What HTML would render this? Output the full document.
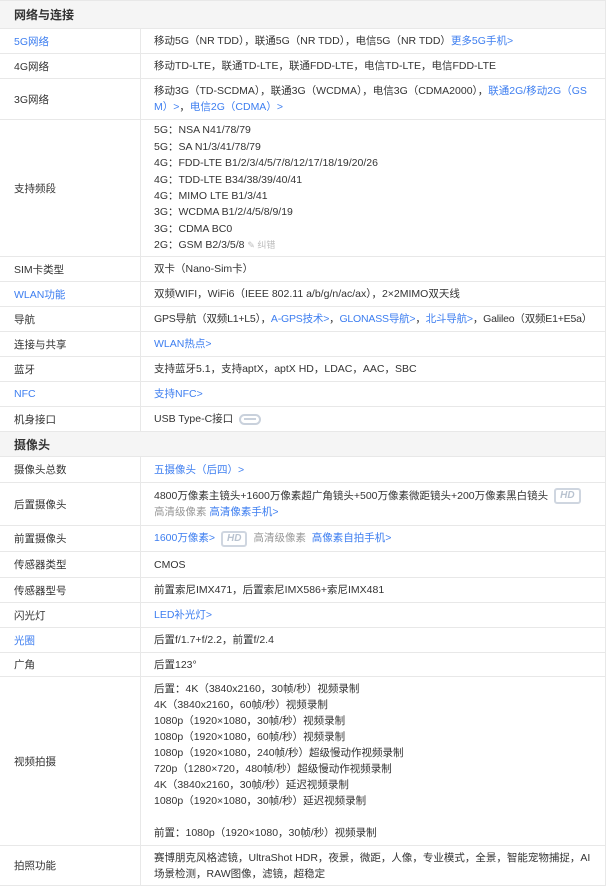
<!DOCTYPE html>
<html><head><meta charset="utf-8"><style>
*{margin:0;padding:0;box-sizing:border-box}
body{width:612px;height:881px;overflow:hidden;background:#fff;font-family:"Liberation Sans","Noto Sans CJK SC",sans-serif;font-size:10.5px;color:#333}
.t{position:absolute;left:0;top:0;width:606px;border-right:1px solid #e8e8e8;border-top:1px solid #e8e8e8}
.r{display:flex;border-bottom:1px solid #e8e8e8}
.l{width:141px;flex:none;border-right:1px solid #e8e8e8;padding-left:14px;display:flex;align-items:center}
.v{flex:1;padding:0 12px 0 13px;display:flex;align-items:center;line-height:16px}
.h{background:#f5f5f5;padding-left:14px;display:flex;align-items:center;font-weight:bold;font-size:12px;border-bottom:1px solid #e8e8e8}
a,.a{color:#3d7ef0;text-decoration:none}
.g{color:#999}
.hd{display:inline-block;border:2px solid #cfd6e0;border-radius:3px;color:#b9c3d0;font-style:italic;font-weight:bold;font-size:10px;line-height:12px;padding:0 4px;margin:0 6px;vertical-align:middle}
.usb{display:inline-block;width:22px;height:11px;border:2px solid #c9d1dc;border-radius:6px;margin-left:6px;vertical-align:middle;position:relative}
.usb:after{content:"";position:absolute;left:3px;right:3px;top:2.5px;height:2px;background:#c9d1dc}
</style></head><body>
<div class="t">
<div class="h" style="height:28px">网络与连接</div>
<div class="r" style="height:25px"><div class="l a">5G网络</div><div class="v"><div>移动5G（NR TDD），联通5G（NR TDD），电信5G（NR TDD）<a>更多5G手机&gt;</a></div></div></div>
<div class="r" style="height:25px"><div class="l">4G网络</div><div class="v"><div>移动TD-LTE，联通TD-LTE，联通FDD-LTE，电信TD-LTE，电信FDD-LTE</div></div></div>
<div class="r" style="height:41px"><div class="l">3G网络</div><div class="v"><div style="word-break:break-all">移动3G（TD-SCDMA），联通3G（WCDMA），电信3G（CDMA2000），<a>联通2G/移动2G（GSM）&gt;</a>，<a>电信2G（CDMA）&gt;</a></div></div></div>
<div class="r" style="height:137px"><div class="l">支持频段</div><div class="v" style="line-height:16.4px"><div>5G：NSA N41/78/79<br>5G：SA N1/3/41/78/79<br>4G：FDD-LTE B1/2/3/4/5/7/8/12/17/18/19/20/26<br>4G：TDD-LTE B34/38/39/40/41<br>4G：MIMO LTE B1/3/41<br>3G：WCDMA B1/2/4/5/8/9/19<br>3G：CDMA BC0<br>2G：GSM B2/3/5/8 <span class="g" style="font-size:9px;color:#bbb">✎ 纠错</span></div></div></div>
<div class="r" style="height:25px"><div class="l">SIM卡类型</div><div class="v"><div>双卡（Nano-Sim卡）</div></div></div>
<div class="r" style="height:25px"><div class="l a">WLAN功能</div><div class="v"><div>双频WIFI，WiFi6（IEEE 802.11 a/b/g/n/ac/ax），2×2MIMO双天线</div></div></div>
<div class="r" style="height:25px"><div class="l">导航</div><div class="v"><div style="white-space:nowrap;letter-spacing:-0.2px">GPS导航（双频L1+L5），<a>A-GPS技术&gt;</a>，<a>GLONASS导航&gt;</a>，<a>北斗导航&gt;</a>，Galileo（双频E1+E5a）</div></div></div>
<div class="r" style="height:25px"><div class="l">连接与共享</div><div class="v"><div><a>WLAN热点&gt;</a></div></div></div>
<div class="r" style="height:25px"><div class="l">蓝牙</div><div class="v"><div>支持蓝牙5.1，支持aptX，aptX HD，LDAC，AAC，SBC</div></div></div>
<div class="r" style="height:25px"><div class="l a">NFC</div><div class="v"><div><a>支持NFC&gt;</a></div></div></div>
<div class="r" style="height:25px"><div class="l">机身接口</div><div class="v"><div>USB Type-C接口<span class="usb"></span></div></div></div>
<div class="h" style="height:25px">摄像头</div>
<div class="r" style="height:26px"><div class="l">摄像头总数</div><div class="v"><div><a>五摄像头（后四）&gt;</a></div></div></div>
<div class="r" style="height:43px"><div class="l">后置摄像头</div><div class="v"><div>4800万像素主镜头+1600万像素超广角镜头+500万像素微距镜头+200万像素黑白镜头<span class="hd">HD</span><span class="g">高清级像素</span> <a>高清像素手机&gt;</a></div></div></div>
<div class="r" style="height:26px"><div class="l">前置摄像头</div><div class="v"><div><a>1600万像素&gt;</a><span class="hd">HD</span><span class="g">高清级像素</span>&nbsp; <a>高像素自拍手机&gt;</a></div></div></div>
<div class="r" style="height:26px"><div class="l">传感器类型</div><div class="v"><div>CMOS</div></div></div>
<div class="r" style="height:25px"><div class="l">传感器型号</div><div class="v"><div>前置索尼IMX471，后置索尼IMX586+索尼IMX481</div></div></div>
<div class="r" style="height:25px"><div class="l">闪光灯</div><div class="v"><div><a>LED补光灯&gt;</a></div></div></div>
<div class="r" style="height:25px"><div class="l a">光圈</div><div class="v"><div>后置f/1.7+f/2.2，前置f/2.4</div></div></div>
<div class="r" style="height:24px"><div class="l">广角</div><div class="v"><div>后置123°</div></div></div>
<div class="r" style="height:169px"><div class="l">视频拍摄</div><div class="v"><div>后置：4K（3840x2160，30帧/秒）视频录制<br>4K（3840x2160，60帧/秒）视频录制<br>1080p（1920×1080，30帧/秒）视频录制<br>1080p（1920×1080，60帧/秒）视频录制<br>1080p（1920×1080，240帧/秒）超级慢动作视频录制<br>720p（1280×720，480帧/秒）超级慢动作视频录制<br>4K（3840x2160，30帧/秒）延迟视频录制<br>1080p（1920×1080，30帧/秒）延迟视频录制<br><br>前置：1080p（1920×1080，30帧/秒）视频录制</div></div></div>
<div class="r" style="height:40px"><div class="l">拍照功能</div><div class="v"><div>赛博朋克风格滤镜，UltraShot HDR，夜景，微距，人像，专业模式，全景，智能宠物捕捉，AI场景检测，RAW图像，滤镜，超稳定</div></div></div>
</div>
</body></html>
